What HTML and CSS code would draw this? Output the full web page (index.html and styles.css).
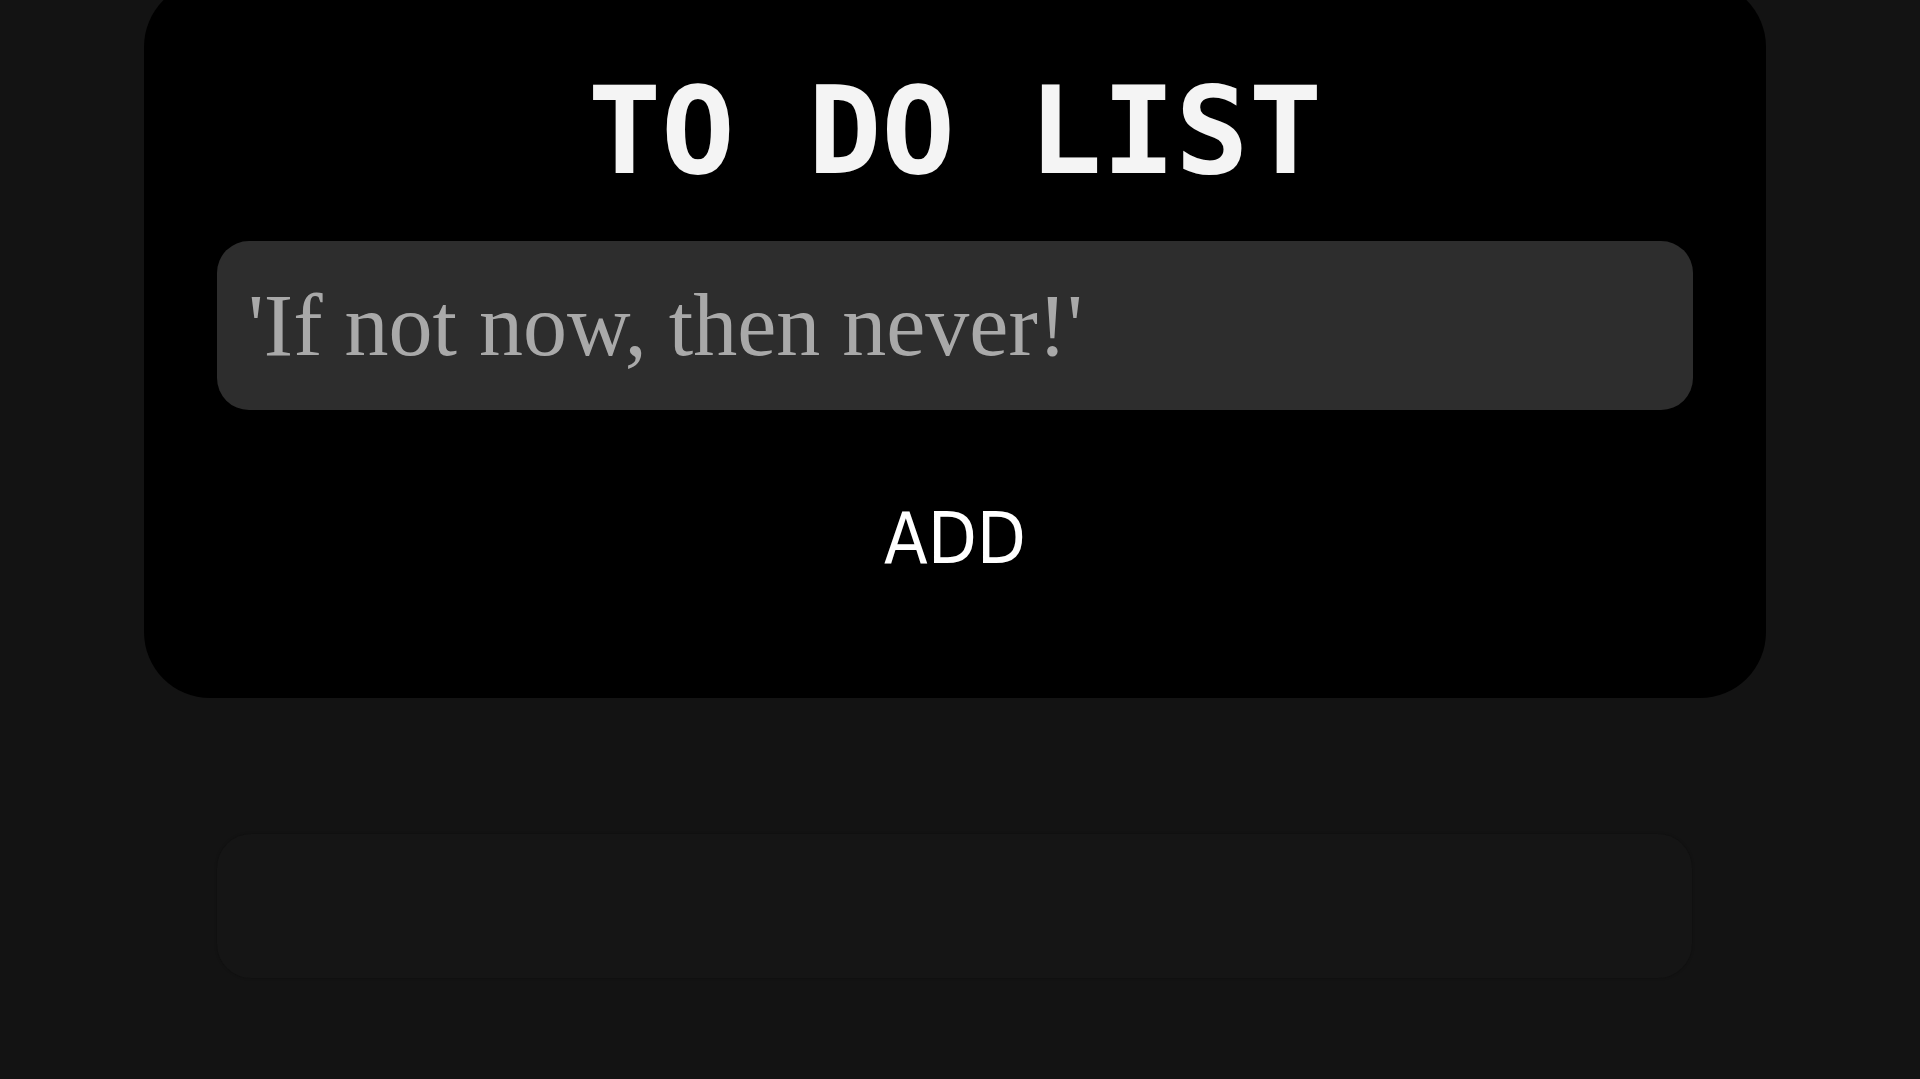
FILE: index.html
```html
<!DOCTYPE html>
<html lang="en">
<head>
<meta charset="utf-8">
<title>To Do List</title>
<link rel="stylesheet" href="styles.css">
</head>
<body>
  <main class="page">
    <section class="card">
      <h1 class="title">TO DO LIST</h1>
      <input class="task-input" type="text" placeholder="'If not now, then never!'">
      <button class="add-btn" type="button">ADD</button>
    </section>
    <ul class="task-list"></ul>
  </main>
</body>
</html>
```

FILE: styles.css
```css
html, body {
  margin: 0;
  padding: 0;
  background: #131313;
  height: 100%;
  overflow: hidden;
}

.page {
  display: flex;
  flex-direction: column;
  align-items: flex-start;
  padding-left: 144px;
}

.card {
  box-sizing: border-box;
  width: 1622px;
  margin-top: -19px;
  padding: 80px 73px 117px;
  background: #000;
  border-radius: 66px;
  display: flex;
  flex-direction: column;
  align-items: stretch;
}

.title {
  margin: 0;
  font-family: "DejaVu Sans Mono", monospace;
  font-weight: bold;
  font-size: 122px;
  line-height: 140px;
  color: #f4f4f4;
  text-align: center;
}

.task-input {
  box-sizing: border-box;
  margin: 40px 0 0;
  height: 169px;
  padding: 0 31px;
  border: none;
  outline: none;
  border-radius: 32px;
  background: #2d2d2d;
  font-family: "Liberation Serif", serif;
  font-size: 88px;
  color: #e0e0e0;
}

.task-input::placeholder {
  color: #a9a9a9;
}

.add-btn {
  align-self: center;
  margin-top: 86px;
  padding: 0;
  border: none;
  background: transparent;
  font-family: "DejaVu Sans Condensed", "DejaVu Sans", sans-serif;
  font-size: 71px;
  line-height: 85px;
  color: #fff;
  cursor: pointer;
}

.task-list {
  box-sizing: border-box;
  list-style: none;
  width: 1475px;
  height: 144px;
  margin: 136px 0 0 73px;
  padding: 0;
  background: #151515;
  border-radius: 34px;
  box-shadow: 0 0 3px rgba(0, 0, 0, 0.3);
}
```
